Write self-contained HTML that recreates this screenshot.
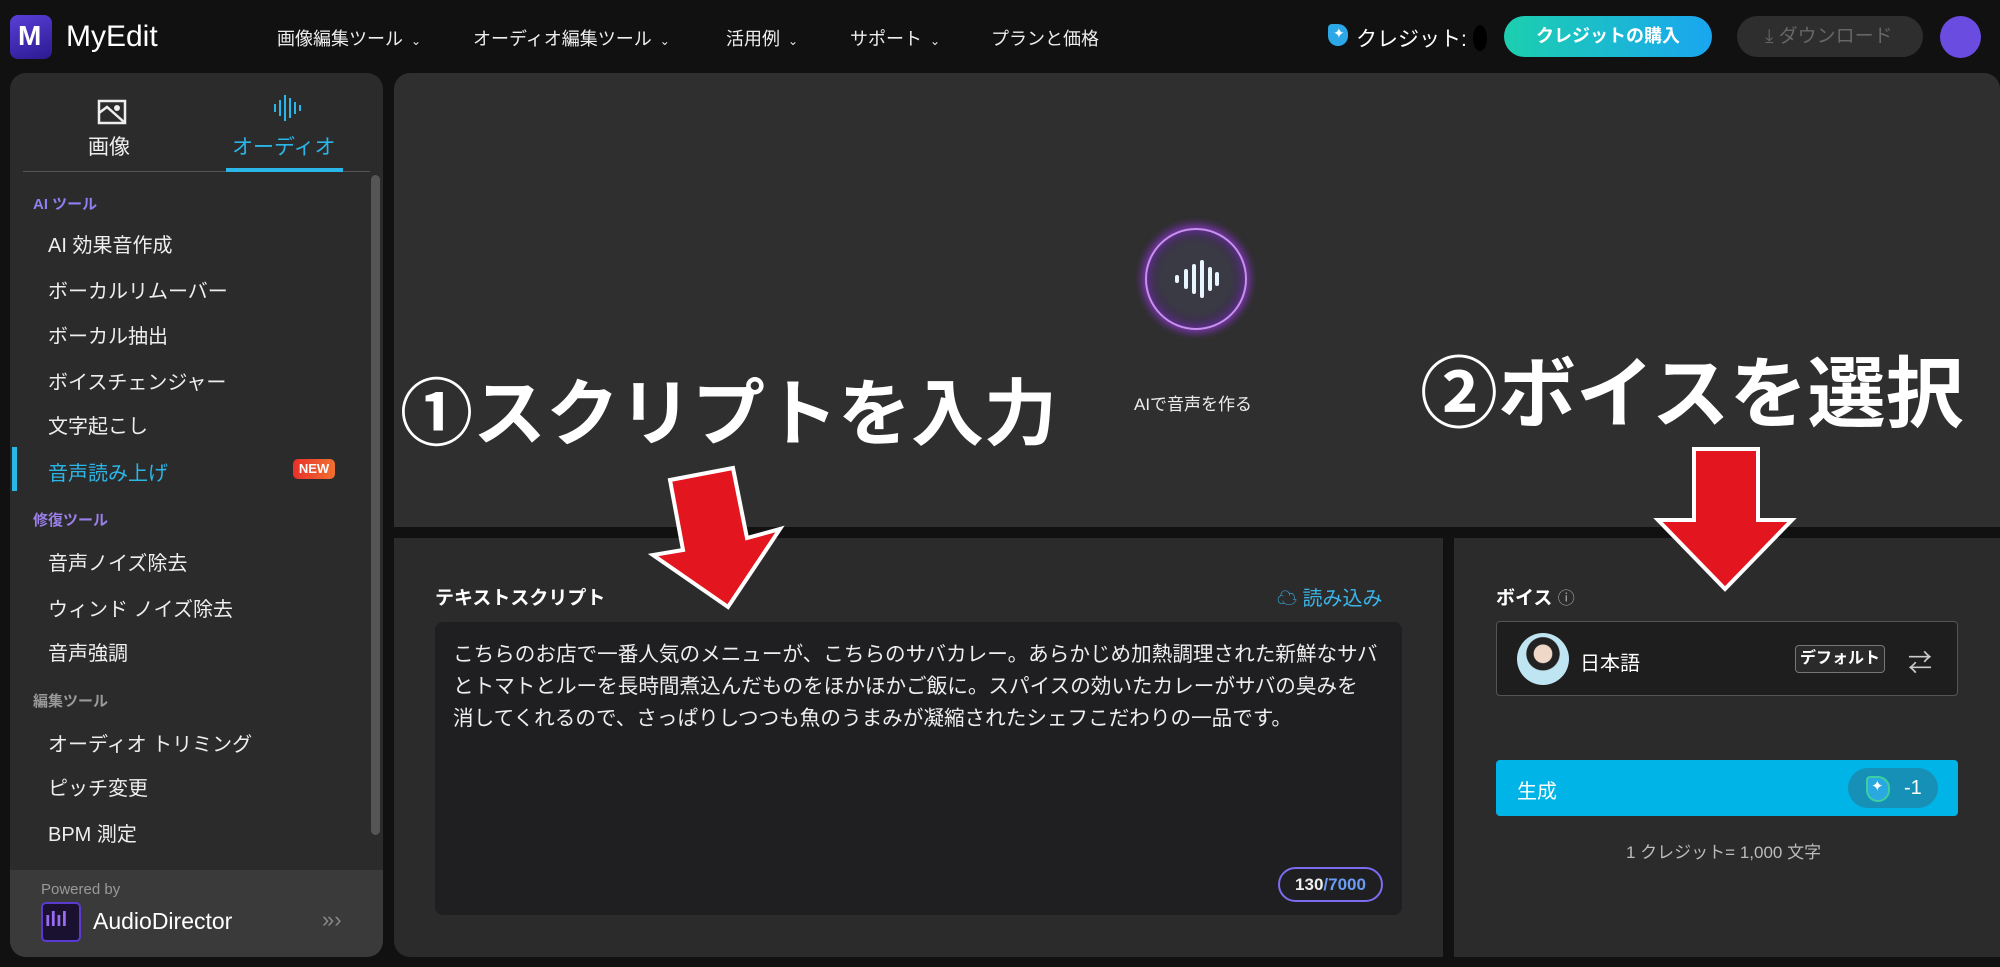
<!DOCTYPE html>
<html><head><meta charset="utf-8"><style>
*{margin:0;padding:0;box-sizing:border-box}
body{width:2000px;height:967px;background:#111;position:relative;overflow:hidden;font-family:"Liberation Sans","Noto Sans CJK JP",sans-serif;color:#eee}
.a{position:absolute;white-space:nowrap}
.nav{font-size:18px;color:#eee;top:25px}
.nav i{font-style:normal;font-size:12px;margin-left:8px}
.side{left:10px;top:73px;width:373px;height:884px;background:#2b2b2b;border-radius:16px;overflow:hidden}
.it{font-size:20px;color:#eee;left:38px}
.sec{font-size:15px;font-weight:bold;left:23px}
.big{font-weight:bold;color:#fff;font-family:"Noto Sans CJK JP",sans-serif}
</style></head><body>
<!-- header -->
<div class="a" style="left:10px;top:15px;width:42px;height:44px;border-radius:8px;background:linear-gradient(160deg,#5a3fd8,#2a1a90)"></div>
<div class="a" style="left:18px;top:20px;font-size:28px;font-weight:bold;color:#fff">M</div>
<div class="a" style="left:66px;top:20px;font-size:30px;color:#fff">MyEdit</div>
<div class="a nav" style="left:277px">画像編集ツール<i>⌄</i></div>
<div class="a nav" style="left:473px">オーディオ編集ツール<i>⌄</i></div>
<div class="a nav" style="left:726px">活用例<i>⌄</i></div>
<div class="a nav" style="left:850px">サポート<i>⌄</i></div>
<div class="a nav" style="left:991px">プランと価格</div>
<div class="a" style="left:1328px;top:24px;width:20px;height:22px;border-radius:4px 10px 10px 10px;background:#2ca8e8"></div>
<div class="a" style="left:1333px;top:25px;font-size:14px;color:#fff">✦</div>
<div class="a" style="left:1356px;top:23px;font-size:21px;color:#fff">クレジット:</div>
<div class="a" style="left:1473px;top:25px;width:14px;height:26px;border-radius:50%;background:#000"></div>
<div class="a" style="left:1504px;top:16px;width:208px;height:41px;border-radius:21px;background:linear-gradient(90deg,#1ccfae,#1aa6f0);color:#fff;font-weight:bold;font-size:18px;text-align:center;line-height:41px">クレジットの購入</div>
<div class="a" style="left:1737px;top:16px;width:186px;height:41px;border-radius:21px;background:#2e2e2e;color:#666;font-size:19px;line-height:41px;padding-left:28px">⤓ ダウンロード</div>
<div class="a" style="left:1940px;top:16px;width:41px;height:42px;border-radius:50%;background:#6a4ce0"></div>
<!-- sidebar -->
<div class="a side">
 <svg class="a" style="left:87px;top:26px" width="30" height="26" viewBox="0 0 30 26"><rect x="2" y="2" width="26" height="22" fill="none" stroke="#eee" stroke-width="2.5"/><path d="M2 14 L10 8 L27 23" fill="none" stroke="#eee" stroke-width="2.5"/><circle cx="20" cy="9" r="3" fill="#eee"/></svg>
 <div class="a" style="left:78px;top:58px;font-size:21px">画像</div>
 <svg class="a" style="left:262px;top:20px" width="30" height="30"><g stroke="#2bb6e8" stroke-width="2"><line x1="3" y1="11" x2="3" y2="19"/><line x1="8" y1="7" x2="8" y2="23"/><line x1="13" y1="2" x2="13" y2="28"/><line x1="18" y1="5" x2="18" y2="25"/><line x1="23" y1="9" x2="23" y2="21"/><line x1="28" y1="12" x2="28" y2="18"/></g></svg>
 <div class="a" style="left:222px;top:58px;font-size:21px;color:#2bb6e8">オーディオ</div>
 <div class="a" style="left:13px;top:98px;width:347px;height:1px;background:#555"></div>
 <div class="a" style="left:216px;top:95px;width:117px;height:4px;background:#2bb6e8"></div>
 <div class="a" style="left:361px;top:102px;width:9px;height:660px;border-radius:5px;background:#555"></div>
 <div class="a sec" style="top:120px;color:#8c7ff0">AI ツール</div>
 <div class="a it" style="top:156px">AI 効果音作成</div>
 <div class="a it" style="top:202px">ボーカルリムーバー</div>
 <div class="a it" style="top:247px">ボーカル抽出</div>
 <div class="a it" style="top:293px">ボイスチェンジャー</div>
 <div class="a it" style="top:337px">文字起こし</div>
 <div class="a" style="left:2px;top:374px;width:5px;height:44px;background:#2bb6e8"></div>
 <div class="a it" style="top:384px;color:#2bb6e8">音声読み上げ</div>
 <div class="a" style="left:283px;top:386px;width:42px;height:20px;border-radius:5px;background:linear-gradient(90deg,#e8302a,#f07030);font-size:13px;font-weight:bold;text-align:center;line-height:20px;color:#fff">NEW</div>
 <div class="a sec" style="top:436px;color:#9a7fe8">修復ツール</div>
 <div class="a it" style="top:474px">音声ノイズ除去</div>
 <div class="a it" style="top:520px">ウィンド ノイズ除去</div>
 <div class="a it" style="top:564px">音声強調</div>
 <div class="a sec" style="top:617px;color:#999">編集ツール</div>
 <div class="a it" style="top:655px">オーディオ トリミング</div>
 <div class="a it" style="top:699px">ピッチ変更</div>
 <div class="a it" style="top:745px">BPM 測定</div>
 <div class="a" style="left:0;top:797px;width:373px;height:87px;background:#3a3a3a"></div>
 <div class="a" style="left:31px;top:808px;font-size:15px;color:#999">Powered by</div>
 <div class="a" style="left:31px;top:829px;width:40px;height:40px;border-radius:5px;background:#1a1030;border:2px solid #5a3ad0"></div>
 <div class="a" style="left:35px;top:836px;font-size:20px;color:#9a6cf0;font-weight:bold">ılıl</div>
 <div class="a" style="left:83px;top:835px;font-size:23px;color:#fff">AudioDirector</div>
 <div class="a" style="left:312px;top:834px;font-size:22px;color:#888">»›</div>
</div>
<!-- top main -->
<div class="a" style="left:394px;top:73px;width:1606px;height:454px;background:#2f2f2f;border-radius:16px 16px 0 0"></div>
<div class="a" style="left:1136px;top:218px;width:120px;height:120px;border-radius:50%;background:radial-gradient(circle,#3a3a44 40%,rgba(80,40,120,.5) 60%,rgba(47,47,47,0) 72%)"></div>
<div class="a" style="left:1145px;top:228px;width:102px;height:102px;border-radius:50%;border:2px solid #c890f0;box-shadow:0 0 10px #a040e0,inset 0 0 10px #7030b0"></div>
<svg class="a" style="left:1174px;top:260px" width="46" height="38"><g stroke="#e8f4ff" stroke-width="4" stroke-linecap="round"><line x1="3" y1="17" x2="3" y2="21"/><line x1="12" y1="11" x2="12" y2="27"/><line x1="20" y1="6" x2="20" y2="32"/><line x1="28" y1="2" x2="28" y2="36"/><line x1="36" y1="9" x2="36" y2="29"/><line x1="43" y1="14" x2="43" y2="24"/></g></svg>
<div class="a" style="left:1134px;top:390px;font-size:17px;color:#eee">AIで音声を作る</div>
<div class="a big" style="left:400px;top:355px;font-size:73px">①スクリプトを入力</div>
<div class="a big" style="left:1420px;top:332px;font-size:78px">②ボイスを選択</div>
<!-- bottom panels -->
<div class="a" style="left:394px;top:538px;width:1049px;height:419px;background:#2b2b2b;border-radius:0 0 0 16px"></div>
<div class="a" style="left:1454px;top:538px;width:546px;height:419px;background:#2b2b2b"></div>
<div class="a" style="left:435px;top:583px;font-size:19px;font-weight:bold;color:#fff">テキストスクリプト</div>
<div class="a" style="left:1277px;top:582px;font-size:20px;color:#3bb5e8">☁ 読み込み</div>
<div class="a" style="left:435px;top:622px;width:967px;height:293px;background:#1f1f21;border-radius:8px"></div>
<div class="a" style="left:453px;top:639px;width:925px;font-size:20.6px;line-height:32px;color:#eee;white-space:normal">こちらのお店で一番人気のメニューが、こちらのサバカレー。あらかじめ加熱調理された新鮮なサバとトマトとルーを長時間煮込んだものをほかほかご飯に。スパイスの効いたカレーがサバの臭みを消してくれるので、さっぱりしつつも魚のうまみが凝縮されたシェフこだわりの一品です。</div>
<div class="a" style="left:1278px;top:867px;width:105px;height:35px;border-radius:18px;border:2px solid #7b6cf0;font-size:17px;font-weight:bold;text-align:center;line-height:31px">130<span style="color:#6a9cf5">/7000</span></div>
<div class="a" style="left:1496px;top:583px;font-size:19px;font-weight:bold;color:#fff">ボイス <span style="font-weight:normal;color:#aaa;font-size:17px">ⓘ</span></div>
<div class="a" style="left:1496px;top:621px;width:462px;height:75px;border:1px solid #555;border-radius:4px;background:#1e1e1e"></div>
<div class="a" style="left:1517px;top:633px;width:52px;height:52px;border-radius:50%;background:radial-gradient(circle at 50% 40%,#f0d8c8 22%,#222 24%,#222 40%,#bfe4f2 42%)"></div>
<div class="a" style="left:1580px;top:647px;font-size:20px;color:#fff">日本語</div>
<div class="a" style="left:1795px;top:645px;width:90px;height:28px;border:1px solid #777;border-radius:4px;background:#2a2a2a;font-size:16px;font-weight:bold;text-align:center;line-height:26px;color:#fff">デフォルト</div>
<div class="a" style="left:1908px;top:643px;font-size:24px;color:#ccc">⇄</div>
<div class="a" style="left:1496px;top:760px;width:462px;height:56px;background:#00b4e8;border-radius:4px"></div>
<div class="a" style="left:1517px;top:775px;font-size:20px;color:#fff">生成</div>
<div class="a" style="left:1848px;top:768px;width:90px;height:40px;border-radius:20px;background:#1790b8"></div>
<div class="a" style="left:1866px;top:776px;width:24px;height:26px;border-radius:4px 12px 12px 12px;background:#2aa8e0;border:2px solid #3ad0a0"></div>
<div class="a" style="left:1871px;top:777px;font-size:15px;color:#fff">✦</div>
<div class="a" style="left:1904px;top:777px;font-size:20px;color:#fff">-1</div>
<div class="a" style="left:1626px;top:838px;font-size:17px;color:#bbb">1 クレジット= 1,000 文字</div>
<!-- arrows -->
<svg class="a" style="left:0;top:0" width="2000" height="967"><g fill="#e3161f" stroke="#fff" stroke-width="4" stroke-linejoin="miter">
<polygon points="670,480 733,468 747,538 780,529 728,607 653,555 683,550"/>
<polygon points="1694,449 1758,449 1758,520 1792,520 1725,589 1658,520 1694,520"/>
</g></svg>
</body></html>
